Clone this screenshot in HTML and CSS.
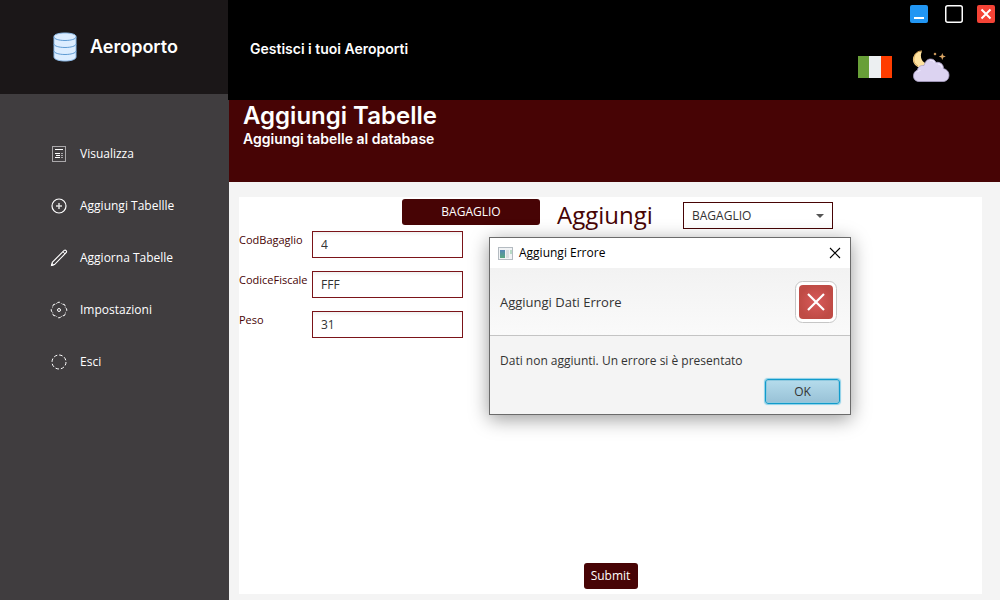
FILE: index.html
```html
<!DOCTYPE html>
<html lang="it">
<head>
<meta charset="utf-8">
<meta name="viewport" content="width=device-width, initial-scale=1">
<title>Aeroporto</title>
<link rel="stylesheet" href="styles.css">
</head>
<body>
<div class="app">
  <aside class="sidebar">
    <div class="brand">
      <svg class="brand-icon" width="24" height="30" viewBox="0 0 24 30" aria-hidden="true">
        <path d="M1 4.500C1 2.300 6 1 12 1s11 1.300 11 3.500v20.500c0 2.500-5 4-11 4S1 27.500 1 25z" fill="#dcedff" stroke="#8dbbe8" stroke-width="1"/>
        <path d="M1 5c0 2 5 3.500 11 3.500S23 7 23 5M1 12c0 2 5 3.500 11 3.500S23 14 23 12M1 19c0 2 5 3.500 11 3.500S23 21 23 19" fill="none" stroke="#5f9bd3" stroke-width="1"/>
      </svg>
      <span class="brand-name">Aeroporto</span>
    </div>
    <nav class="menu">
      <button class="menu-item" type="button">
        <svg width="18" height="18" viewBox="0 0 18 18" fill="none" stroke="#fff" aria-hidden="true"><rect x="2.500" y="1.500" width="13" height="15" stroke="#aaa8aa"/><path d="M5 4.500h8M5 8.500h5M6 10.500h4M5 12.500h5"/><path d="M11 8.500h2M11 10.500h2M11 12.500h2" stroke="#aaa8aa"/></svg>
        <span>Visualizza</span>
      </button>
      <button class="menu-item" type="button">
        <svg width="18" height="18" viewBox="0 0 18 18" fill="none" stroke="#fff" aria-hidden="true"><circle cx="9" cy="9" r="7" stroke-width="1.200"/><path d="M9 6v6M6 9h6" stroke="#ddd" stroke-width="1.500"/></svg>
        <span>Aggiungi Tabellle</span>
      </button>
      <button class="menu-item" type="button">
        <svg width="18" height="18" viewBox="0 0 18 18" fill="none" stroke="#fff" aria-hidden="true"><path d="M1.500 16.500l.8-3.200L14.200 1.400q1-.7 1.900.2t.2 1.900L4.500 15.600z" stroke-width="1.100"/><path d="M13 2.800L15.200 5M1.500 16.500l2-.6-1.400-1.400z"/></svg>
        <span>Aggiorna Tabelle</span>
      </button>
      <button class="menu-item" type="button">
        <svg width="18" height="18" viewBox="0 0 18 18" fill="none" stroke="#fff" aria-hidden="true"><circle cx="9" cy="9" r="1.500"/><path stroke-dasharray="4 1.200" d="M6.500 2.700Q7.500 1.200 9 1.200t2.500 1.500M12.500 3.200q2.500-.6 2.800 2.300M15.300 6.500q1.500 1 1.500 2.500t-1.500 2.500M15.300 12.500q-.3 2.900-2.800 2.300M11.500 15.300Q10.500 16.800 9 16.800t-2.500-1.500M5.500 14.800q-2.500.6-2.800-2.300M2.700 11.500q-1.500-1-1.500-2.500t1.500-2.500M2.700 5.500q.3-2.900 2.800-2.300"/></svg>
        <span>Impostazioni</span>
      </button>
      <button class="menu-item" type="button">
        <svg width="18" height="18" viewBox="0 0 18 18" fill="none" stroke="#fff" aria-hidden="true"><circle cx="9" cy="9" r="7" stroke-dasharray="3.500 2" stroke-width="1"/></svg>
        <span>Esci</span>
      </button>
    </nav>
  </aside>

  <main class="main">
    <header class="topbar">
      <h2 class="topbar-title">Gestisci i tuoi Aeroporti</h2>
      <div class="topbar-side">
        <div class="window-controls">
          <button class="control" type="button" aria-label="Riduci">
            <svg width="18" height="18" viewBox="0 0 18 18"><rect width="18" height="18" rx="2" fill="#2196f3"/><rect x="4" y="12" width="10" height="2" fill="#fff"/></svg>
          </button>
          <button class="control control-max" type="button" aria-label="Ingrandisci">
            <svg width="18" height="18" viewBox="0 0 18 18"><rect x=".75" y=".75" width="16.500" height="16.500" rx="2" fill="#000" stroke="#fff" stroke-width="1.500"/></svg>
          </button>
          <button class="control control-close" type="button" aria-label="Chiudi">
            <svg width="18" height="18" viewBox="0 0 18 18"><rect width="18" height="18" rx="2" fill="#f44336"/><path d="M4.500 4.500l9 9M13.500 4.500l-9 9" stroke="#fff" stroke-width="2"/></svg>
          </button>
        </div>
        <div class="quick">
          <button class="control" type="button" aria-label="Italiano">
            <svg width="34" height="24" viewBox="0 0 34 24"><path d="M0 1h11v22H0z" fill="#689f38"/><path d="M11 1h12v22H11z" fill="#eceff1"/><path d="M23 1h11v22H23z" fill="#ff3d00"/></svg>
          </button>
          <button class="control" type="button" aria-label="Tema notte">
            <svg width="38" height="34" viewBox="0 0 38 34">
              <path d="M10 1.500A8 8 0 1 0 15.500 14 8.500 8.500 0 0 1 10 1.500z" fill="#ffe3a0"/>
              <path d="M10 1A8 8 0 0 0 6 16" fill="none" stroke="#d9a75c" stroke-width="1"/>
              <path d="M30.300 3l.9 2.600 2.600.9-2.600.9-.9 2.600-.9-2.600-2.600-.9 2.600-.9zM23 2.500l1.500 1.500L23 5.500 21.500 4z" fill="#dda765"/>
              <path d="M7 31.500C3.500 31.500 1.500 29 1.500 26c0-3 1.500-5 4-6 .3-3 3-5 6.500-4.500C13.500 11 15.500 9 18.500 9c3 0 4.500 1.500 5.500 3.500 4-.8 7.500 1.500 7.500 6 3.500 1 5.500 3.500 5.500 6.500 0 4-2.500 6.500-6 6.500z" fill="#dcd3f1" stroke="#aaa0c3" stroke-width=".8"/>
              <path d="M18 10.500c1.500-.5 3.500 0 4.500 2M26 14c2 0 3.500 1.500 4 3.500M5.500 22c.8-1 2-1.500 3-1.500" fill="none" stroke="#f1ebff" stroke-width="1.200"/>
            </svg>
          </button>
        </div>
      </div>
    </header>

    <section class="banner">
      <h1 class="banner-title">Aggiungi Tabelle</h1>
      <p class="banner-text">Aggiungi tabelle al database</p>
    </section>

    <section class="content">
      <form class="panel">
        <div class="toolbar">
          <button class="btn btn-table" type="button">BAGAGLIO</button>
          <label class="toolbar-title" for="table">Aggiungi</label>
          <div class="select-wrap">
            <select class="select" id="table"><option>BAGAGLIO</option></select>
            <svg class="arrow" width="8" height="4" viewBox="0 0 8 4" aria-hidden="true"><path d="M0 0h8L4 4z" fill="#555"/></svg>
          </div>
        </div>
        <div class="fields">
          <label for="cod">CodBagaglio</label><input id="cod" type="text" value="4">
          <label for="fiscale">CodiceFiscale</label><input id="fiscale" type="text" value="FFF">
          <label for="peso">Peso</label><input id="peso" type="text" value="31">
        </div>
        <button class="btn btn-submit" type="button">Submit</button>
      </form>
    </section>
  </main>

  <div class="dialog" role="dialog" aria-labelledby="dialog-title">
    <div class="dialog-bar">
      <svg width="15" height="13" viewBox="0 0 15 13" aria-hidden="true"><defs><linearGradient id="pane" x2="0" y2="1"><stop offset="0" stop-color="#5486b5"/><stop offset="1" stop-color="#58a880"/></linearGradient></defs><rect x=".5" y=".5" width="14" height="12" fill="#f1f3f5" stroke="#b4bbc1"/><rect x="2" y="3" width="5" height="8" fill="url(#pane)"/><rect x="8" y="3" width="3" height="8" fill="#d9dee1"/><rect x="12" y="3" width="2" height="4" fill="#b7dac5"/></svg>
      <h2 class="dialog-name" id="dialog-title">Aggiungi Errore</h2>
      <button class="dialog-close" type="button" aria-label="Chiudi finestra"><svg width="12" height="12" viewBox="0 0 12 12"><path d="M1 1l10 10M11 1L1 11" stroke="#000" stroke-width="1.100"/></svg></button>
    </div>
    <div class="dialog-head">
      <h3 class="dialog-heading">Aggiungi Dati Errore</h3>
      <svg width="42" height="42" viewBox="0 0 42 42" aria-hidden="true"><defs><radialGradient id="red"><stop offset="0" stop-color="#d85a5a"/><stop offset="1" stop-color="#bf4b45"/></radialGradient></defs><rect x=".5" y=".5" width="41" height="41" rx="7" fill="#fff" stroke="#c6c6c6"/><rect x="4" y="4" width="34" height="34" rx="4" fill="url(#red)"/><path d="M13 13l16 16M29 13L13 29" stroke="#fff" stroke-width="2.200"/></svg>
    </div>
    <div class="dialog-body">
      <p class="dialog-text">Dati non aggiunti. Un errore si è presentato</p>
      <button class="dialog-ok" type="button">OK</button>
    </div>
  </div>
</div>
</body>
</html>
```
FILE: styles.css
```css
* {
  box-sizing: border-box;
}

body {
  margin: 0;
  font: 12px/16px "Open Sans", "Noto Sans", sans-serif;
  color: #333;
}

h1, h2, h3, p {
  margin: 0;
}

button, input, select {
  font: inherit;
}

button {
  padding: 0;
  border: 0;
  background: none;
  cursor: pointer;
}

svg {
  display: block;
  flex: none;
}

.app {
  display: grid;
  grid-template-columns: 229px 1fr;
  min-height: 100vh;
}

.sidebar {
  background: #403d3f;
}

.brand {
  display: flex;
  align-items: center;
  gap: 13px;
  height: 94px;
  padding-left: 53px;
  background: #1b1718;
}

.brand-name {
  font: 600 18px/24px Inter, sans-serif;
  color: #fff;
}

.menu {
  display: flex;
  flex-direction: column;
  gap: 16px;
  padding-top: 42px;
}

.menu-item {
  display: flex;
  align-items: center;
  gap: 12px;
  height: 36px;
  padding-left: 50px;
  color: #fff;
}

.main {
  display: flex;
  flex-direction: column;
}

.topbar {
  display: flex;
  justify-content: space-between;
  height: 100px;
  margin-left: -1px;
  padding-left: 22px;
  background: #000;
}

.topbar-title {
  align-self: center;
  padding-bottom: 2px;
  font: 600 14px/18px Inter, sans-serif;
  color: #fff;
}

.topbar-side {
  display: flex;
  flex-direction: column;
  gap: 27px;
  padding-top: 5px;
}

.window-controls {
  display: flex;
  padding-right: 5px;
  justify-content: flex-end;
}

.control-max {
  margin-left: 17px;
}

.control-close {
  margin-left: 14px;
}

.quick {
  display: flex;
  align-items: center;
  gap: 20px;
  padding-right: 50px;
}

.banner {
  height: 82px;
  padding: 2px 14px;
  background: #470405;
  color: #fff;
}

.banner-title {
  font: 600 24px/28px Inter, sans-serif;
}

.banner-text {
  font: 600 14px/18px Inter, sans-serif;
}

.content {
  display: flex;
  flex: 1;
  padding: 15px 18px 6px 10px;
  background: #f4f4f4;
}

.panel {
  display: flex;
  flex: 1;
  flex-direction: column;
  background: #fff;
}

.toolbar {
  display: flex;
  align-items: flex-start;
  height: 34px;
  padding: 2px 0 0 163px;
}

.btn {
  height: 26px;
  border-radius: 3px;
  background: #470405;
  color: #fff;
}

.btn-table {
  width: 138px;
}

.toolbar-title {
  width: 126px;
  margin-left: 17px;
  font-size: 24px;
  line-height: 32px;
  color: #470405;
}

.select-wrap {
  position: relative;
  width: 150px;
  margin-top: 3px;
}

.select {
  display: block;
  width: 100%;
  height: 27px;
  padding: 0 8px;
  border: 1px solid #470405;
  border-radius: 0;
  background: #fff;
  color: #333;
  appearance: none;
}

.arrow {
  position: absolute;
  top: 12px;
  right: 9px;
  pointer-events: none;
}

.fields {
  display: grid;
  grid-template-columns: 73px 151px;
  row-gap: 13px;
  color: #470405;
}

.fields label {
  padding-top: 1px;
  font-size: 11px;
  white-space: nowrap;
}

.fields input {
  width: 100%;
  height: 27px;
  padding: 0 8px;
  border: 1px solid #7b1419;
  background: linear-gradient(#f1f1f1, #fff 4px);
  color: #333;
}

.btn-submit {
  align-self: center;
  width: 54px;
  margin-top: auto;
  margin-bottom: 5px;
}

.dialog {
  position: absolute;
  top: 237px;
  left: 489px;
  width: 362px;
  border: 1px solid #6b6b6b;
  background: #f4f4f4;
  box-shadow: 0 4px 18px rgba(0, 0, 0, 0.4);
}

.dialog-bar {
  display: flex;
  align-items: center;
  gap: 6px;
  height: 30px;
  padding: 0 9px 0 8px;
  background: #fff;
  color: #000;
}

.dialog-name {
  flex: 1;
  font-size: 12px;
  font-weight: 400;
}

.dialog-head {
  display: flex;
  align-items: center;
  justify-content: space-between;
  height: 68px;
  padding: 0 13px 0 10px;
  border-bottom: 1px solid #c4c4c4;
  background: linear-gradient(#f2f2f2, #fafafa);
}

.dialog-heading {
  font-size: 13px;
  font-weight: 400;
}

.dialog-body {
  display: flex;
  flex-direction: column;
  gap: 10px;
  padding: 17px 10px;
  padding-bottom: 10px;
}

.dialog-ok {
  align-self: flex-end;
  width: 75px;
  height: 25px;
  border: 1px solid #119bcb;
  border-radius: 3px;
  background: linear-gradient(#b5dcec, #98c1d6);
  box-shadow: 0 0 1px 1px #8bd0e8, inset 0 0 0 1px #8fc9df;
  color: #333;
}
```
